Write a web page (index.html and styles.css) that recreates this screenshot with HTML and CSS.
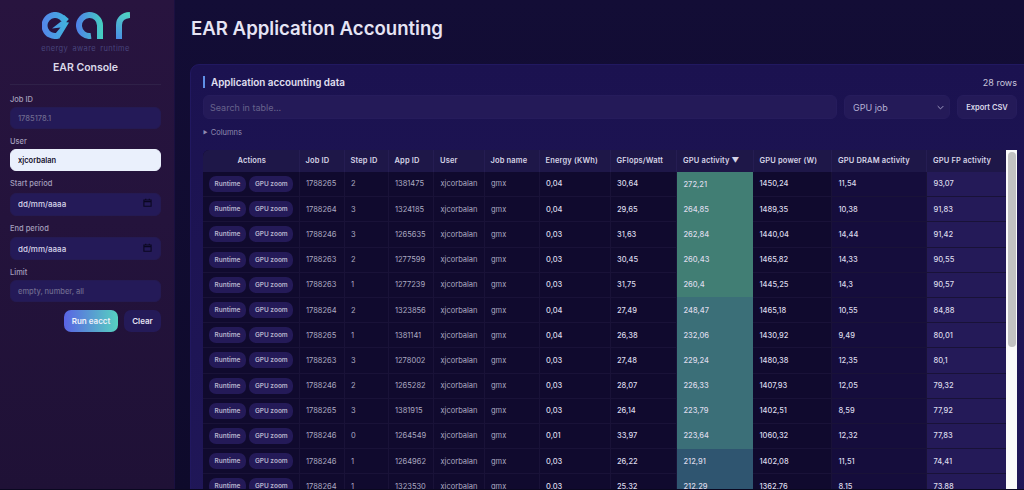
FILE: index.html
```html
<!DOCTYPE html>
<html lang="en">
<head>
<meta charset="utf-8">
<title>EAR Application Accounting</title>
<link rel="stylesheet" href="styles.css">
</head>
<body>
<div class="app">
  <aside class="sidebar">
    <div class="brand">
      <svg class="logo" viewBox="0 0 88 27" width="88" height="27" aria-hidden="true">
        <defs>
          <linearGradient id="g1" gradientUnits="userSpaceOnUse" x1="0" y1="0" x2="27" y2="0">
            <stop offset="0" stop-color="#5585ea"/>
            <stop offset="1" stop-color="#3fb6dc"/>
          </linearGradient>
          <linearGradient id="g2" gradientUnits="userSpaceOnUse" x1="34" y1="0" x2="61" y2="0">
            <stop offset="0" stop-color="#4f80ea"/>
            <stop offset="1" stop-color="#45d0c0"/>
          </linearGradient>
          <linearGradient id="g3" gradientUnits="userSpaceOnUse" x1="74" y1="27" x2="88" y2="0">
            <stop offset="0" stop-color="#4a8ce6"/>
            <stop offset="1" stop-color="#50d8c0"/>
          </linearGradient>
        </defs>
        <path d="M24.5 5L22 8A10.5 10.5 0 1 0 16 23.56" fill="none" stroke="url(#g1)" stroke-width="6"/>
        <path d="M10 16.5L19 9.5L27 10.5L17 27L13.5 21.5L18.5 15.5Z" fill="url(#g1)"/>
        <path d="M49 23.9A10.5 10.5 0 1 1 58 13.5V27" fill="none" stroke="url(#g2)" stroke-width="6"/>
        <path d="M77 27V13C77 7 81 3.4 88 3" fill="none" stroke="url(#g3)" stroke-width="6"/>
      </svg>
      <div class="tagline">energy aware runtime</div>
      <div class="console">EAR Console</div>
    </div>
    <form class="filters">
      <label class="field"><span class="field-label">Job ID</span>
        <input class="input muted" type="text" value="1785178.1"></label>
      <label class="field"><span class="field-label">User</span>
        <input class="input filled" type="text" value="xjcorbalan"></label>
      <label class="field"><span class="field-label">Start period</span>
        <span class="date-wrap"><input class="input date" type="text" value="dd/mm/aaaa">
        <svg class="cal" viewBox="0 0 10 10" width="9" height="9" aria-hidden="true"><path d="M1 2.2h8v7H1zM1 4h8M3 .8v1.6M7 .8v1.6" fill="none" stroke="#0a0720" stroke-width="1.2"/></svg></span></label>
      <label class="field"><span class="field-label">End period</span>
        <span class="date-wrap"><input class="input date" type="text" value="dd/mm/aaaa">
        <svg class="cal" viewBox="0 0 10 10" width="9" height="9" aria-hidden="true"><path d="M1 2.2h8v7H1zM1 4h8M3 .8v1.6M7 .8v1.6" fill="none" stroke="#0a0720" stroke-width="1.2"/></svg></span></label>
      <label class="field"><span class="field-label">Limit</span>
        <input class="input" type="text" placeholder="empty, number, all"></label>
      <div class="form-actions">
        <button class="btn-run" type="button">Run eacct</button>
        <button class="btn-clear" type="button">Clear</button>
      </div>
    </form>
  </aside>
  <main class="main">
    <h1 class="title">EAR Application Accounting</h1>
    <section class="panel">
      <div class="panel-head">
        <h2 class="panel-title">Application accounting data</h2>
        <span class="row-count">28 rows</span>
      </div>
      <div class="toolbar">
        <input class="search" type="text" placeholder="Search in table...">
        <div class="select">GPU job
          <svg class="chev" viewBox="0 0 10 6" width="7" height="5" aria-hidden="true"><path d="M1 1l4 4 4-4" fill="none" stroke="#b6b2d4" stroke-width="1.2"/></svg>
        </div>
        <button class="export" type="button">Export CSV</button>
      </div>
      <div class="columns"><span class="caret">▶</span> Columns</div>
      <div class="table-area">
        <div class="table-wrap">
          <table class="data">
            <colgroup>
              <col class="c-actions"><col class="c-job"><col class="c-step"><col class="c-app"><col class="c-user"><col class="c-name"><col class="c-energy"><col class="c-gflops"><col class="c-act"><col class="c-power"><col class="c-dram"><col class="c-fp">
            </colgroup>
            <thead>
              <tr><th class="center">Actions</th><th>Job ID</th><th>Step ID</th><th>App ID</th><th>User</th><th>Job name</th><th>Energy (KWh)</th><th>GFlops/Watt</th><th>GPU activity ▼</th><th>GPU power (W)</th><th>GPU DRAM activity</th><th>GPU FP activity</th></tr>
            </thead>
            <tbody>
              <tr><td class="acts"><button class="pill" type="button">Runtime</button><button class="pill" type="button">GPU zoom</button></td><td class="dim">1788265</td><td class="dim">2</td><td class="dim">1381475</td><td class="dim">xjcorbalan</td><td class="dim">gmx</td><td>0,04</td><td>30,64</td><td class="heat" style="background:#417e74">272,21</td><td>1450,24</td><td class="dram">11,54</td><td class="fp">93,07</td></tr>
              <tr><td class="acts"><button class="pill" type="button">Runtime</button><button class="pill" type="button">GPU zoom</button></td><td class="dim">1788264</td><td class="dim">3</td><td class="dim">1324185</td><td class="dim">xjcorbalan</td><td class="dim">gmx</td><td>0,04</td><td>29,65</td><td class="heat" style="background:#417e74">264,85</td><td>1489,35</td><td class="dram">10,38</td><td class="fp">91,83</td></tr>
              <tr><td class="acts"><button class="pill" type="button">Runtime</button><button class="pill" type="button">GPU zoom</button></td><td class="dim">1788246</td><td class="dim">3</td><td class="dim">1265635</td><td class="dim">xjcorbalan</td><td class="dim">gmx</td><td>0,03</td><td>31,63</td><td class="heat" style="background:#417e74">262,84</td><td>1440,04</td><td class="dram">14,44</td><td class="fp">91,42</td></tr>
              <tr><td class="acts"><button class="pill" type="button">Runtime</button><button class="pill" type="button">GPU zoom</button></td><td class="dim">1788263</td><td class="dim">2</td><td class="dim">1277599</td><td class="dim">xjcorbalan</td><td class="dim">gmx</td><td>0,03</td><td>30,45</td><td class="heat" style="background:#417e74">260,43</td><td>1465,82</td><td class="dram">14,33</td><td class="fp">90,55</td></tr>
              <tr><td class="acts"><button class="pill" type="button">Runtime</button><button class="pill" type="button">GPU zoom</button></td><td class="dim">1788263</td><td class="dim">1</td><td class="dim">1277239</td><td class="dim">xjcorbalan</td><td class="dim">gmx</td><td>0,03</td><td>31,75</td><td class="heat" style="background:#417e74">260,4</td><td>1445,25</td><td class="dram">14,3</td><td class="fp">90,57</td></tr>
              <tr><td class="acts"><button class="pill" type="button">Runtime</button><button class="pill" type="button">GPU zoom</button></td><td class="dim">1788264</td><td class="dim">2</td><td class="dim">1323856</td><td class="dim">xjcorbalan</td><td class="dim">gmx</td><td>0,04</td><td>27,49</td><td class="heat" style="background:#3b6f78">248,47</td><td>1465,18</td><td class="dram">10,55</td><td class="fp">84,88</td></tr>
              <tr><td class="acts"><button class="pill" type="button">Runtime</button><button class="pill" type="button">GPU zoom</button></td><td class="dim">1788265</td><td class="dim">1</td><td class="dim">1381141</td><td class="dim">xjcorbalan</td><td class="dim">gmx</td><td>0,04</td><td>26,38</td><td class="heat" style="background:#3b6f78">232,06</td><td>1430,92</td><td class="dram">9,49</td><td class="fp">80,01</td></tr>
              <tr><td class="acts"><button class="pill" type="button">Runtime</button><button class="pill" type="button">GPU zoom</button></td><td class="dim">1788263</td><td class="dim">3</td><td class="dim">1278002</td><td class="dim">xjcorbalan</td><td class="dim">gmx</td><td>0,03</td><td>27,48</td><td class="heat" style="background:#3b6f78">229,24</td><td>1480,38</td><td class="dram">12,35</td><td class="fp">80,1</td></tr>
              <tr><td class="acts"><button class="pill" type="button">Runtime</button><button class="pill" type="button">GPU zoom</button></td><td class="dim">1788246</td><td class="dim">2</td><td class="dim">1265282</td><td class="dim">xjcorbalan</td><td class="dim">gmx</td><td>0,03</td><td>28,07</td><td class="heat" style="background:#3b6f78">226,33</td><td>1407,93</td><td class="dram">12,05</td><td class="fp">79,32</td></tr>
              <tr><td class="acts"><button class="pill" type="button">Runtime</button><button class="pill" type="button">GPU zoom</button></td><td class="dim">1788265</td><td class="dim">3</td><td class="dim">1381915</td><td class="dim">xjcorbalan</td><td class="dim">gmx</td><td>0,03</td><td>26,14</td><td class="heat" style="background:#3b6f78">223,79</td><td>1402,51</td><td class="dram">8,59</td><td class="fp">77,92</td></tr>
              <tr><td class="acts"><button class="pill" type="button">Runtime</button><button class="pill" type="button">GPU zoom</button></td><td class="dim">1788246</td><td class="dim">0</td><td class="dim">1264549</td><td class="dim">xjcorbalan</td><td class="dim">gmx</td><td>0,01</td><td>33,97</td><td class="heat" style="background:#3b6f78">223,64</td><td>1060,32</td><td class="dram">12,32</td><td class="fp">77,83</td></tr>
              <tr><td class="acts"><button class="pill" type="button">Runtime</button><button class="pill" type="button">GPU zoom</button></td><td class="dim">1788246</td><td class="dim">1</td><td class="dim">1264962</td><td class="dim">xjcorbalan</td><td class="dim">gmx</td><td>0,03</td><td>26,22</td><td class="heat" style="background:#2f5570">212,91</td><td>1402,08</td><td class="dram">11,51</td><td class="fp">74,41</td></tr>
              <tr><td class="acts"><button class="pill" type="button">Runtime</button><button class="pill" type="button">GPU zoom</button></td><td class="dim">1788264</td><td class="dim">1</td><td class="dim">1323530</td><td class="dim">xjcorbalan</td><td class="dim">gmx</td><td>0,03</td><td>25,32</td><td class="heat" style="background:#2f5570">212,29</td><td>1362,76</td><td class="dram">8,15</td><td class="fp">73,88</td></tr>
            </tbody>
          </table>
        </div>
        <div class="scrollbar"><div class="thumb"></div></div>
      </div>
    </section>
  </main>
</div>
</body>
</html>
```
FILE: styles.css
```css
* { box-sizing: border-box; }
html, body { margin: 0; height: 100%; overflow: hidden; }
body { font-family: Inter, "Liberation Sans", sans-serif; background: #0a0820; color: #e8e6f5; }
.app { display: flex; height: 489px; overflow: hidden; }

.sidebar { flex: 0 0 175px; padding: 12px 13px 0 10px; background: linear-gradient(180deg, #28143f 0%, #24133c 45%, #1f1136 100%); border-right: 1px solid #1a1040; }
.brand { display: flex; flex-direction: column; align-items: center; height: 73px; border-bottom: 1px solid #2f2148; margin-bottom: 9px; }
.logo { display: block; flex: none; margin-bottom: 5px; }
.tagline { font-size: 7.5px; letter-spacing: .35px; word-spacing: 2px; color: #47447c; line-height: 9px; white-space: nowrap; }
.console { font-size: 10.5px; font-weight: 600; color: #dcdaea; margin-top: 9px; line-height: 12px; }
.filters { display: flex; flex-direction: column; }
.field { display: flex; flex-direction: column; margin-bottom: 7px; }
.field-label { font-size: 7.5px; font-weight: 500; color: #a49fbc; line-height: 9px; margin: 1px 0 3px; }
.input { width: 100%; height: 22px; border: 1px solid #241a52; border-radius: 6px; background: #241a58; color: #dcdaea; font: 500 7.5px Inter, sans-serif; padding: 0 7px; outline: none; }
.input::placeholder { color: #6f6a8f; }
.input.muted { color: #6f6a8f; }
.input.filled { background: #eaf0fc; border-color: #eaf0fc; color: #14102c; font-weight: 600; }
.input.date { height: 23px; font-size: 8px; color: #d8d6ea; }
.date-wrap { position: relative; display: block; }
.cal { position: absolute; right: 9px; top: 7px; }
.form-actions { display: flex; justify-content: flex-end; gap: 6px; margin-top: 1px; }
.btn-run { width: 54px; height: 22px; border: 0; border-radius: 7px; background: linear-gradient(90deg, #5a63e4, #56d2c0); color: #eef0fa; font: 600 8px Inter, sans-serif; }
.btn-clear { width: 37px; height: 22px; border: 0; border-radius: 7px; background: #241a58; color: #e4e2f2; font: 600 8px Inter, sans-serif; }

.main { flex: 1; min-width: 0; padding: 17px 0 0 15px; background: linear-gradient(180deg, #130d36, #0e0a2b); }
.title { margin: 0 0 25px 1px; font-size: 18.6px; line-height: 22px; font-weight: 600; color: #e6e4f4; white-space: nowrap; }
.panel { margin-right: -12px; height: 470px; padding: 10px 18px 0 12px; background: linear-gradient(180deg, #1b1250, #201758); border: 1px solid #211860; border-radius: 9px; }
.panel-head { display: flex; justify-content: space-between; align-items: center; height: 14px; margin-bottom: 6px; }
.panel-title { margin: 0; font-size: 9.9px; font-weight: 600; color: #e2e0f2; border-left: 2px solid #5f8fe6; padding-left: 6px; line-height: 12px; }
.row-count { font-size: 9px; color: #c9c6dc; }
.toolbar { display: flex; gap: 7px; height: 24px; }
.search { flex: 1; min-width: 0; border: 1px solid #261c5c; border-radius: 6px; background: #241a58; color: #ddd; font: 400 9px Inter, sans-serif; padding: 0 6px; outline: none; }
.search::placeholder { color: #67628c; }
.select { flex: 0 0 106px; display: flex; align-items: center; justify-content: space-between; padding: 0 5px 0 8px; border: 1px solid #261c5c; border-radius: 6px; background: #241a58; color: #b6b2d4; font-size: 9px; }
.export { flex: 0 0 60px; border: 1px solid #261c5c; border-radius: 6px; background: #241a58; color: #dcdaea; font: 600 7.5px Inter, sans-serif; padding: 0; }
.columns { height: 12px; margin: 7px 0 12px; font-size: 7.5px; line-height: 12px; color: #8f8bb0; }
.caret { font-size: 5px; vertical-align: 1px; margin-right: 1px; }
.table-area { display: flex; height: 340px; }
.table-wrap { flex: 0 0 803px; overflow: hidden; background: #100a2e; border-radius: 6px 0 0 0; }
.scrollbar { flex: 0 0 11px; padding: 2px 1.5px; background: #fafafa; }
.thumb { height: 195px; border-radius: 4px; background: #c2c2c2; }

.data { width: 803px; table-layout: fixed; border-collapse: collapse; font-size: 7.5px; }
.c-actions { width: 96px; } .c-job { width: 45px; } .c-step { width: 44px; } .c-app { width: 45.5px; }
.c-user { width: 50.5px; } .c-name { width: 55px; } .c-energy { width: 71px; } .c-gflops { width: 66.5px; }
.c-act { width: 76.5px; } .c-power { width: 78.5px; } .c-dram { width: 95px; } .c-fp { width: 79.5px; }
th { height: 21.5px; padding: 0 4px 0 6px; text-align: left; font-weight: 600; color: #d6d4e6; background: #1e1748; border-right: 1px solid #251d52; white-space: nowrap; font-size: 7.5px; letter-spacing: .15px; }
th.center { text-align: center; }
td { height: 25.2px; padding: 0 4px 0 6.5px; font-weight: 500; color: #dcdaea; border-right: 1px solid #191238; border-bottom: 1px solid #191238; white-space: nowrap; overflow: hidden; }
td.dim { color: #adaac2; font-weight: 400; }
td.heat { border-bottom: 0; border-right: 0; }
td.dram { background: #150d3c; }
td.fp { background: #241a58; }
.acts { padding: 0 0 0 6px; }
.pill { height: 16px; padding: 0 5.5px; margin-right: 3.5px; border: 0; border-radius: 7px; background: #241a58; color: #b6b3cc; font: 600 6.5px Inter, sans-serif; }
```
